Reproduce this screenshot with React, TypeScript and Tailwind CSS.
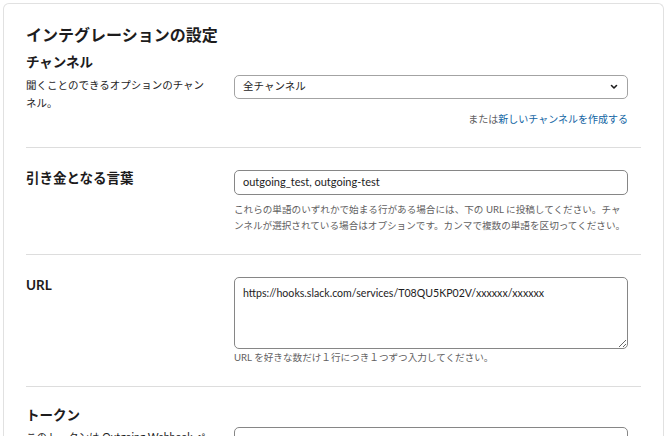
import React from "react";

const font = { fontFamily: "Lato, 'Noto Sans CJK JP', sans-serif" };

function Chevron() {
  return (
    <svg width="8" height="6" viewBox="0 0 8 6" className="text-[#1d1c1d]">
      <path d="M1.5 1.5 L4 4 L6.5 1.5" fill="none" stroke="currentColor" strokeWidth="1.6" strokeLinecap="round" strokeLinejoin="round" />
    </svg>
  );
}

export default function App() {
  return (
    <div className="h-[436px] overflow-hidden bg-white pl-[3px] pt-[3px] pr-[5px] text-[#1d1c1d]" style={font}>
      <div className="rounded-t-md border border-b-0 border-[#e1e1e1] px-[22px] pt-[19px]">
        <h1 className="text-[16px] font-bold leading-[24px]">インテグレーションの設定</h1>

        <div className="border-b border-[#dddddd] pb-[20px]">
          <h2 className="mt-[5px] text-[13.5px] font-bold leading-[20px]">チャンネル</h2>
          <div className="mt-[3px] flex">
            <p className="w-[186px] pt-[1px] text-[10.5px] leading-[18px]">聞くことのできるオプションのチャンネル。</p>
            <div className="ml-[22px] w-[394px]">
              <div className="flex h-[24px] items-center justify-between rounded-[5px] border border-[#a3a3a3] pl-[8px] pr-[9px] text-[10.5px]">
                <span>全チャンネル</span>
                <Chevron />
              </div>
              <p className="mt-[12px] text-right text-[10px] leading-[16px] text-[#616061]">
                または<span className="text-[#1264a3]">新しいチャンネルを作成する</span>
              </p>
            </div>
          </div>
        </div>

        <div className="flex border-b border-[#dddddd] pb-[20px] pt-[22px]">
          <h2 className="w-[208px] pt-[1px] text-[13.5px] font-bold leading-[14px]">引き金となる言葉</h2>
          <div className="w-[394px]">
            <div className="flex h-[25px] items-center rounded-[5px] border border-[#868686] px-[8px] text-[11px]">
              outgoing_test, outgoing-test
            </div>
            <p className="mt-[7px] text-[9.6px] leading-[16px] text-[#616061]">
              これらの単語のいずれかで始まる行がある場合には、下の URL に投稿してください。チャンネルが選択されている場合はオプションです。カンマで複数の単語を区切ってください。
            </p>
          </div>
        </div>

        <div className="flex border-b border-[#dddddd] pb-[20px] pt-[22px]">
          <h2 className="w-[208px] pt-[1px] text-[13.5px] font-bold leading-[14px]">URL</h2>
          <div className="w-[394px]">
            <textarea
              readOnly
              defaultValue="https://hooks.slack.com/services/T08QU5KP02V/xxxxxx/xxxxxx"
              className="block h-[72px] w-full rounded-[5px] border border-[#868686] px-[8px] py-[7px] text-[10.6px] leading-[16px] text-[#1d1c1d] outline-none"
              style={font}
            />
            <p className="mt-[1px] text-[9.6px] leading-[16px] text-[#616061]">URL を好きな数だけ１行につき１つずつ入力してください。</p>
          </div>
        </div>

        <div className="pt-[18px]">
          <h2 className="text-[13.5px] font-bold leading-[20px]">トークン</h2>
          <div className="mt-[2px] flex">
            <p className="w-[186px] pt-[1px] text-[10.5px] leading-[18px]">このトークンは Outgoing Webhook ペイロードに含まれます。</p>
            <div className="ml-[22px] w-[394px]">
              <div className="h-[25px] rounded-[5px] border border-[#868686]" />
            </div>
          </div>
        </div>
      </div>
    </div>
  );
}
